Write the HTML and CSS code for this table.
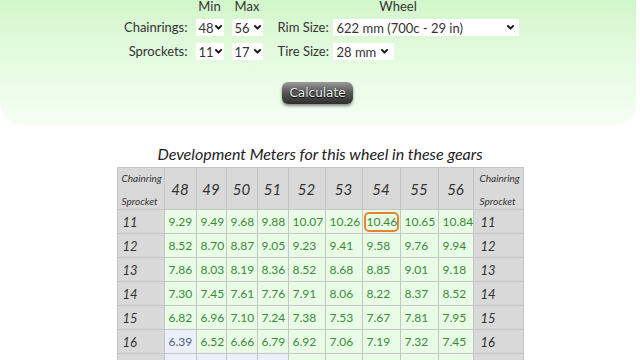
FILE: index.html
```html
<!DOCTYPE html>
<html lang="en">
<head>
<meta charset="utf-8">
<title>Gear Development</title>
<link rel="stylesheet" href="styles.css">
</head>
<body>
<section class="panel">
  <div class="form">
    <span></span>
    <span class="head">Min</span>
    <span class="head">Max</span>
    <span class="head wheel">Wheel</span>

    <span class="label">Chainrings:</span>
    <div class="cell"><div class="sel w-min">48<svg width="7" height="5" viewBox="0 0 7 5"><polyline points="1,1 3.5,3.6 6,1"/></svg></div></div>
    <div class="cell"><div class="sel w-max">56<svg width="7" height="5" viewBox="0 0 7 5"><polyline points="1,1 3.5,3.6 6,1"/></svg></div></div>
    <span class="label2">Rim Size:</span>
    <div class="cell"><div class="sel w-rim">622 mm (700c - 29 in)<svg width="7" height="5" viewBox="0 0 7 5"><polyline points="1,1 3.5,3.6 6,1"/></svg></div></div>

    <span class="label">Sprockets:</span>
    <div class="cell"><div class="sel w-min">11<svg width="7" height="5" viewBox="0 0 7 5"><polyline points="1,1 3.5,3.6 6,1"/></svg></div></div>
    <div class="cell"><div class="sel w-max">17<svg width="7" height="5" viewBox="0 0 7 5"><polyline points="1,1 3.5,3.6 6,1"/></svg></div></div>
    <span class="label2">Tire Size:</span>
    <div class="cell"><div class="sel w-tire">28 mm<svg width="7" height="5" viewBox="0 0 7 5"><polyline points="1,1 3.5,3.6 6,1"/></svg></div></div>
  </div>
  <div class="actions"><button class="btn" type="button">Calculate</button></div>
</section>

<h2 class="title">Development Meters for this wheel in these gears</h2>

<table class="dev">
  <colgroup>
    <col class="c0"><col class="c1"><col class="c2"><col class="c3"><col class="c4"><col class="c5"><col class="c6"><col class="c7"><col class="c8"><col class="c9"><col class="c10">
  </colgroup>
  <thead>
    <tr>
      <th class="corner"><div class="stack"><span>Chainring</span><span>Sprocket</span></div></th>
      <th>48</th><th>49</th><th>50</th><th>51</th><th>52</th><th>53</th><th>54</th><th>55</th><th>56</th>
      <th class="corner last"><div class="stack"><span>Chainring</span><span>Sprocket</span></div></th>
    </tr>
  </thead>
  <tbody>
    <tr><th>11</th><td>9.29</td><td>9.49</td><td>9.68</td><td>9.88</td><td>10.07</td><td>10.26</td><td class="hl"><span>10.46</span></td><td>10.65</td><td>10.84</td><th class="last">11</th></tr>
    <tr><th>12</th><td>8.52</td><td>8.70</td><td>8.87</td><td>9.05</td><td>9.23</td><td>9.41</td><td>9.58</td><td>9.76</td><td>9.94</td><th class="last">12</th></tr>
    <tr><th>13</th><td>7.86</td><td>8.03</td><td>8.19</td><td>8.36</td><td>8.52</td><td>8.68</td><td>8.85</td><td>9.01</td><td>9.18</td><th class="last">13</th></tr>
    <tr><th>14</th><td>7.30</td><td>7.45</td><td>7.61</td><td>7.76</td><td>7.91</td><td>8.06</td><td>8.22</td><td>8.37</td><td>8.52</td><th class="last">14</th></tr>
    <tr><th>15</th><td>6.82</td><td>6.96</td><td>7.10</td><td>7.24</td><td>7.38</td><td>7.53</td><td>7.67</td><td>7.81</td><td>7.95</td><th class="last">15</th></tr>
    <tr><th>16</th><td class="low">6.39</td><td>6.52</td><td>6.66</td><td>6.79</td><td>6.92</td><td>7.06</td><td>7.19</td><td>7.32</td><td>7.45</td><th class="last">16</th></tr>
    <tr><th>17</th><td class="low">6.01</td><td class="low">6.14</td><td class="low">6.26</td><td class="low">6.39</td><td>6.52</td><td>6.64</td><td>6.77</td><td>6.89</td><td>7.02</td><th class="last">17</th></tr>
  </tbody>
</table>
</body>
</html>
```

FILE: styles.css
```css
html, body {
  margin: 0;
  padding: 0;
  background: #ffffff;
}

body {
  font-family: Lato, "Noto Sans", sans-serif;
  color: #333333;
  overflow: hidden;
}

.panel {
  width: 636px;
  height: 125px;
  box-sizing: border-box;
  background: linear-gradient(to bottom, #d2f6ca 0%, #e6fbe2 50%, #f5fff3 100%);
  border-radius: 0 0 22px 22px;
  padding-top: 0;
}

.form {
  display: grid;
  grid-template-columns: 78px 36px 46px 55px 186px;
  grid-template-rows: 12px 17px 17px;
  row-gap: 7px;
  justify-content: center;
  font-size: 13px;
  color: #333;
}

.head {
  line-height: 12px;
  text-align: center;
  width: 28px;
}

.head:nth-child(3) {
  width: 31px;
}

.head.wheel {
  grid-column: 4 / 6;
  width: auto;
}

.label {
  text-align: right;
  padding-right: 8px;
  align-self: center;
  line-height: 17px;
}

.label2 {
  align-self: center;
  line-height: 17px;
}

.cell {
  display: flex;
}

.sel {
  height: 17px;
  background: #ffffff;
  display: flex;
  align-items: center;
  justify-content: space-between;
  box-sizing: border-box;
  padding: 0 2px 0 3px;
  font-size: 13px;
  color: #333;
}

.sel svg {
  flex: none;
}

.sel polyline {
  fill: none;
  stroke: #1e1e1e;
  stroke-width: 2;
  stroke-linecap: round;
  stroke-linejoin: round;
}

.w-min { width: 28px; }
.w-max { width: 31px; }
.w-rim { width: 186px; padding: 0 5px 0 4px; }
.w-tire { width: 61px; padding: 0 6px 0 4px; }

.actions {
  display: flex;
  justify-content: center;
  margin-top: 22px;
  padding-right: 1px;
}

.btn {
  width: 71px;
  height: 22px;
  border: none;
  border-radius: 6px;
  background: linear-gradient(to bottom, #9a9a9a 0%, #5a5a5a 45%, #2e2e2e 100%);
  box-shadow: 0 2px 3px rgba(0, 0, 0, 0.45);
  color: #ededed;
  font-family: "DejaVu Sans", sans-serif;
  font-size: 12px;
  text-shadow: 0 1px 1px #000;
  padding: 0;
}

.title {
  margin: 19px 0 0;
  text-align: center;
  font-size: 16px;
  font-style: italic;
  font-weight: normal;
  color: #222;
  line-height: 20px;
}

.dev {
  margin: 3px auto 0;
  border-collapse: collapse;
  table-layout: fixed;
  width: 406px;
  font-size: 12px;
}

.c0 { width: 47px; }
.c1 { width: 32px; }
.c2 { width: 30px; }
.c3 { width: 31px; }
.c4 { width: 31px; }
.c5 { width: 37px; }
.c6 { width: 37px; }
.c7 { width: 38px; }
.c8 { width: 38px; }
.c9 { width: 35px; }
.c10 { width: 50px; }

.dev th,
.dev td {
  border: 1px solid #c4c4c4;
  padding: 0;
}

.dev thead th {
  height: 41px;
  background: #d9d9d9;
  font-style: italic;
  font-weight: normal;
  font-size: 15px;
  color: #333;
  text-align: center;
}

.dev thead th.corner {
  text-align: left;
  font-size: 10px;
  vertical-align: top;
}

.stack {
  height: 41px;
  display: flex;
  flex-direction: column;
  justify-content: space-between;
  padding: 4px 0 2px 4px;
  box-sizing: border-box;
  line-height: 12px;
}

.dev thead th.last .stack {
  padding-left: 6px;
}

.dev tbody th {
  height: 23px;
  background: #d9d9d9;
  font-style: italic;
  font-weight: normal;
  font-size: 13px;
  color: #333;
  text-align: left;
  padding-left: 5px;
}

.dev tbody th.last {
  padding-left: 7px;
}

.dev td {
  background: #e9fce6;
  color: #3a8a3a;
  padding-left: 4px;
  text-align: left;
}

.dev td.low {
  background: #ebf0fc;
  color: #4f5d7a;
}

.dev td.hl {
  padding: 1px 1px;
}

.dev td.hl span {
  display: block;
  border: 2px solid #e8822c;
  border-radius: 5px;
  padding-left: 1px;
  line-height: 16px;
}
```
